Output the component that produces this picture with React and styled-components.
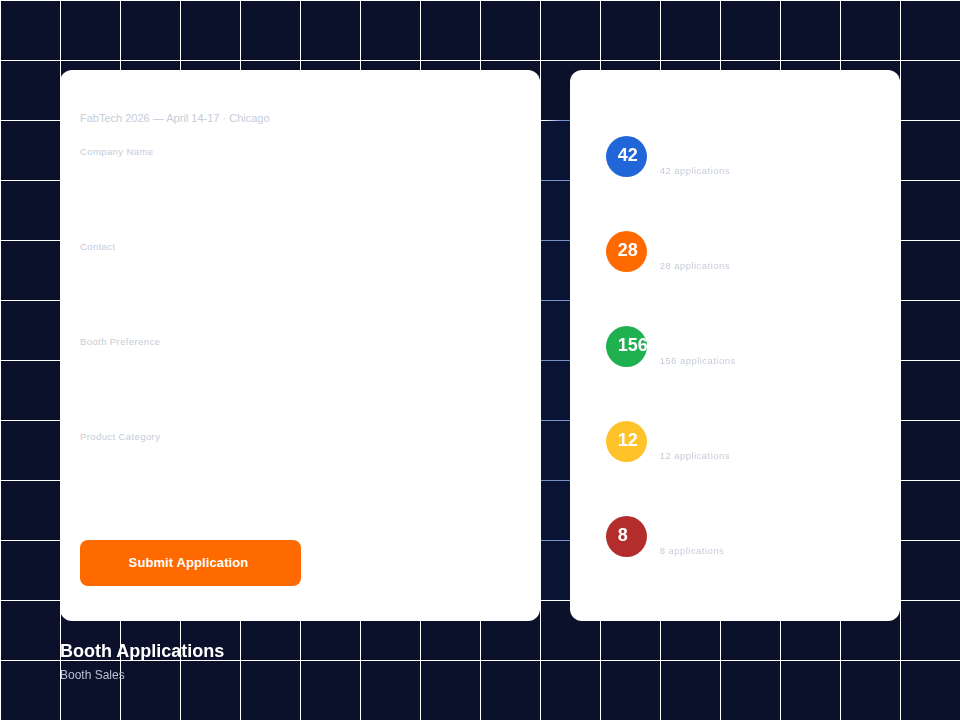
import React from "react";
import styled, { createGlobalStyle } from "styled-components";

const Global = createGlobalStyle`
  html, body { margin: 0; padding: 0; }
  body { font-family: "Liberation Sans", Arial, sans-serif; background: #0b102b; }
`;

const Page = styled.div`
  position: relative;
  width: 960px;
  height: 720px;
  overflow: hidden;
  box-sizing: border-box;
  padding: 70px 60px 0;
  background-color: #0b102b;
  background-image:
    linear-gradient(to right, #ffffff 0, #ffffff 1px, transparent 1px),
    linear-gradient(to bottom, #ffffff 0, #ffffff 1px, transparent 1px);
  background-size: 60px 60px;
  background-position: 60px 60px;
`;

const GapTint = styled.div`
  position: absolute;
  left: 541px;
  top: 121px;
  width: 29px;
  height: 479px;
  background: #a8c0ff;
  mix-blend-mode: multiply;
`;

const GapWash = styled.div`
  position: absolute;
  left: 541px;
  top: 121px;
  width: 29px;
  height: 479px;
  background: rgba(18, 36, 72, 0.3);
`;

const GapFade = styled.div`
  position: absolute;
  left: 541px;
  top: 120px;
  width: 29px;
  height: 1px;
  background: linear-gradient(to right, #ffffff 0, #e4eaf6 7px, #7390cc 20px, #7390cc 100%);
`;

const Columns = styled.div`
  position: relative;
  display: flex;
  gap: 30px;
  height: 551px;
`;

const FormPanel = styled.section`
  width: 481px;
  box-sizing: border-box;
  background: #fff;
  border-radius: 12px;
  padding: 41px 20px 0;
  display: flex;
  flex-direction: column;
`;

const StatsPanel = styled.section`
  width: 331px;
  box-sizing: border-box;
  background: #fff;
  border-radius: 12px;
  padding: 66px 36px 0;
  display: flex;
  flex-direction: column;
  gap: 54px;
`;

const Meta = styled.div`
  font-size: 11px;
  line-height: 14px;
  color: #c6ccd8;
  margin-bottom: 21px;
`;

const Field = styled.div`
  height: 95px;
  font-size: 9.5px;
  line-height: 12px;
  letter-spacing: 0.4px;
  color: #c6ccd8;
`;

const Submit = styled.button`
  width: 221px;
  height: 46px;
  margin-top: 14px;
  border: 0;
  border-radius: 8px;
  background: #ff6a00;
  color: #fff;
  font-family: inherit;
  font-size: 13px;
  font-weight: 700;
  letter-spacing: 0.1px;
  padding: 0 4px 2px 0;
`;

const Row = styled.div`
  display: flex;
  align-items: flex-end;
  gap: 13px;
  height: 41px;
`;

const Badge = styled.div`
  width: 41px;
  height: 41px;
  flex: none;
  box-sizing: border-box;
  border-radius: 50%;
  overflow: hidden;
  padding: 9px 0 0 12px;
  background: ${(p) => p.$color};
  color: #fff;
  font-size: 18px;
  font-weight: 700;
  line-height: 20px;
  white-space: nowrap;
`;

const Count = styled.div`
  font-size: 9.5px;
  line-height: 12px;
  letter-spacing: 0.45px;
  color: #c6ccd8;
`;

const Footer = styled.footer`
  position: relative;
  padding-top: 20px;
`;

const Title = styled.h1`
  margin: 0;
  font-size: 18px;
  line-height: 20px;
  font-weight: 700;
  color: #fff;
`;

const Subtitle = styled.div`
  margin-top: 7px;
  font-size: 12px;
  line-height: 14px;
  color: #b9c1d4;
`;

const fields = ["Company Name", "Contact", "Booth Preference", "Product Category"];
const stats = [
  ["42", "#2166d9"],
  ["28", "#ff6a00"],
  ["156", "#1fb04f"],
  ["12", "#ffc229"],
  ["8", "#b32d2d"],
];

export default function App() {
  return (
    <Page>
      <Global />
      <GapTint />
      <GapWash />
      <GapFade />
      <Columns>
        <FormPanel>
          <Meta>FabTech 2026 — April 14-17 · Chicago</Meta>
          {fields.map((f) => (
            <Field key={f}>{f}</Field>
          ))}
          <Submit>Submit Application</Submit>
        </FormPanel>
        <StatsPanel>
          {stats.map(([n, c]) => (
            <Row key={n}>
              <Badge $color={c}>{n}</Badge>
              <Count>{n} applications</Count>
            </Row>
          ))}
        </StatsPanel>
      </Columns>
      <Footer>
        <Title>Booth Applications</Title>
        <Subtitle>Booth Sales</Subtitle>
      </Footer>
    </Page>
  );
}
